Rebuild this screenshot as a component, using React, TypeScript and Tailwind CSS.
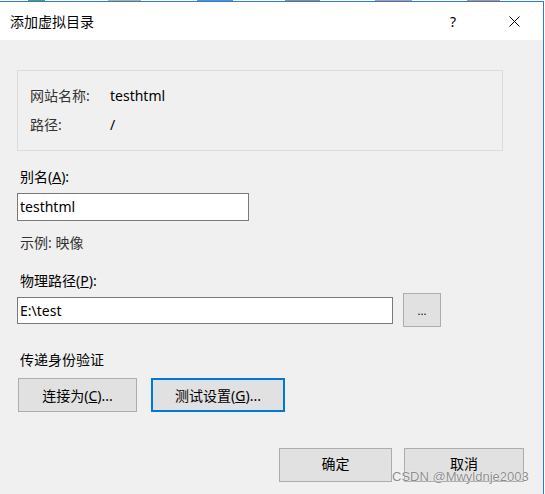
import React from 'react'

const font = { fontFamily: '"Noto Sans", "Noto Sans CJK SC", sans-serif' }

const Btn: React.FC<{ className?: string; children: React.ReactNode; focused?: boolean }> = ({
    className = '',
    children,
    focused
}) => (
    <button
        className={`h-[34px] flex items-center justify-center bg-[#e1e1e1] text-[14px] text-black ${
            focused ? 'border-2 border-[#0078d7]' : 'border border-[#adadad]'
        } ${className}`}
    >
        {children}
    </button>
)

export default function App() {
    return (
        <div className="w-[545px] h-[494px] bg-white overflow-hidden relative" style={font}>
            {/* bit of desktop peeking above the window */}
            <div className="h-[1px] flex">
                <div className="w-[28px]" />
                <div className="w-[17px] bg-[#5a9a6a]" />
                <div className="w-[63px]" />
                <div className="w-[33px] bg-[#c8b07a]" />
                <div className="w-[56px]" />
                <div className="w-[36px] bg-[#5a8fd0]" />
                <div className="w-[52px]" />
                <div className="w-[35px] bg-[#9a8a7a]" />
                <div className="w-[55px]" />
                <div className="w-[37px] bg-[#c89098]" />
                <div className="w-[55px]" />
                <div className="w-[33px] bg-[#c89070]" />
            </div>

            <div className="w-[544px] h-[493px] border-t border-r border-[#2b7bd0] flex flex-col">
                {/* title bar */}
                <div className="h-[38px] bg-white flex items-center pl-[10px] pr-[20px] text-[14px] text-black">
                    <span className="flex-1">添加虚拟目录</span>
                    <span className="w-[16px] text-center mr-[48px]">?</span>
                    <svg width="11" height="11" viewBox="0 0 11 11" className="mr-[3px]">
                        <path d="M0.5 0.5 L10.5 10.5 M10.5 0.5 L0.5 10.5" stroke="#000" strokeWidth="1" fill="none" />
                    </svg>
                </div>

                {/* body */}
                <div className="flex-1 bg-[#f0f0f0] pt-[30px] text-[14px] text-black">
                    <div className="ml-[17px] w-[486px] h-[81px] border border-[#dcdcdc] pt-[15px] pl-[12px] flex flex-col gap-[9px]">
                        <div className="flex leading-[20px]">
                            <span className="w-[80px] text-[#333]">网站名称:</span>
                            <span>testhtml</span>
                        </div>
                        <div className="flex leading-[20px]">
                            <span className="w-[80px] text-[#333]">路径:</span>
                            <span>/</span>
                        </div>
                    </div>

                    <div className="pl-[20px] mt-[16px] leading-[20px]">
                        别名(<span className="underline">A</span>):
                    </div>
                    <div className="ml-[17px] mt-[6px] w-[232px] h-[28px] bg-white border border-[#7a7a7a] flex items-center px-[2px] leading-[20px]">
                        testhtml
                    </div>

                    <div className="pl-[20px] mt-[12px] leading-[20px] text-[#333]">示例: 映像</div>

                    <div className="pl-[20px] mt-[18px] leading-[20px]">
                        物理路径(<span className="underline">P</span>):
                    </div>
                    <div className="ml-[17px] mt-[2px] flex items-center gap-[10px]">
                        <div className="w-[376px] h-[27px] bg-white border border-[#7a7a7a] flex items-center px-[2px]">
                            E:\test
                        </div>
                        <Btn className="w-[38px]">
                            <span className="text-[11px] leading-none">...</span>
                        </Btn>
                    </div>

                    <div className="pl-[20px] mt-[23px] leading-[20px]">传递身份验证</div>
                    <div className="ml-[18px] mt-[8px] flex gap-[14px]">
                        <Btn className="w-[119px]">
                            连接为(<span className="underline">C</span>)...
                        </Btn>
                        <Btn className="w-[134px]" focused>
                            测试设置(<span className="underline">G</span>)...
                        </Btn>
                    </div>

                    <div className="mt-[36px] flex justify-end gap-[12px] pr-[19px]">
                        <Btn className="w-[113px]">
                            <span className="pb-[4px]">确定</span>
                        </Btn>
                        <Btn className="w-[120px]">
                            <span className="pb-[4px]">取消</span>
                        </Btn>
                    </div>
                </div>
            </div>

            {/* watermark */}
            <div
                className="absolute left-[392px] top-[469px] text-[13px] leading-[15px] text-[#8c8c8c]"
                style={{ fontFamily: '"Liberation Sans", Arial, sans-serif', textShadow: '0 0 1px #fff, 0 0 1px #fff' }}
            >
                CSDN @Mwyldnje2003
            </div>
        </div>
    )
}
